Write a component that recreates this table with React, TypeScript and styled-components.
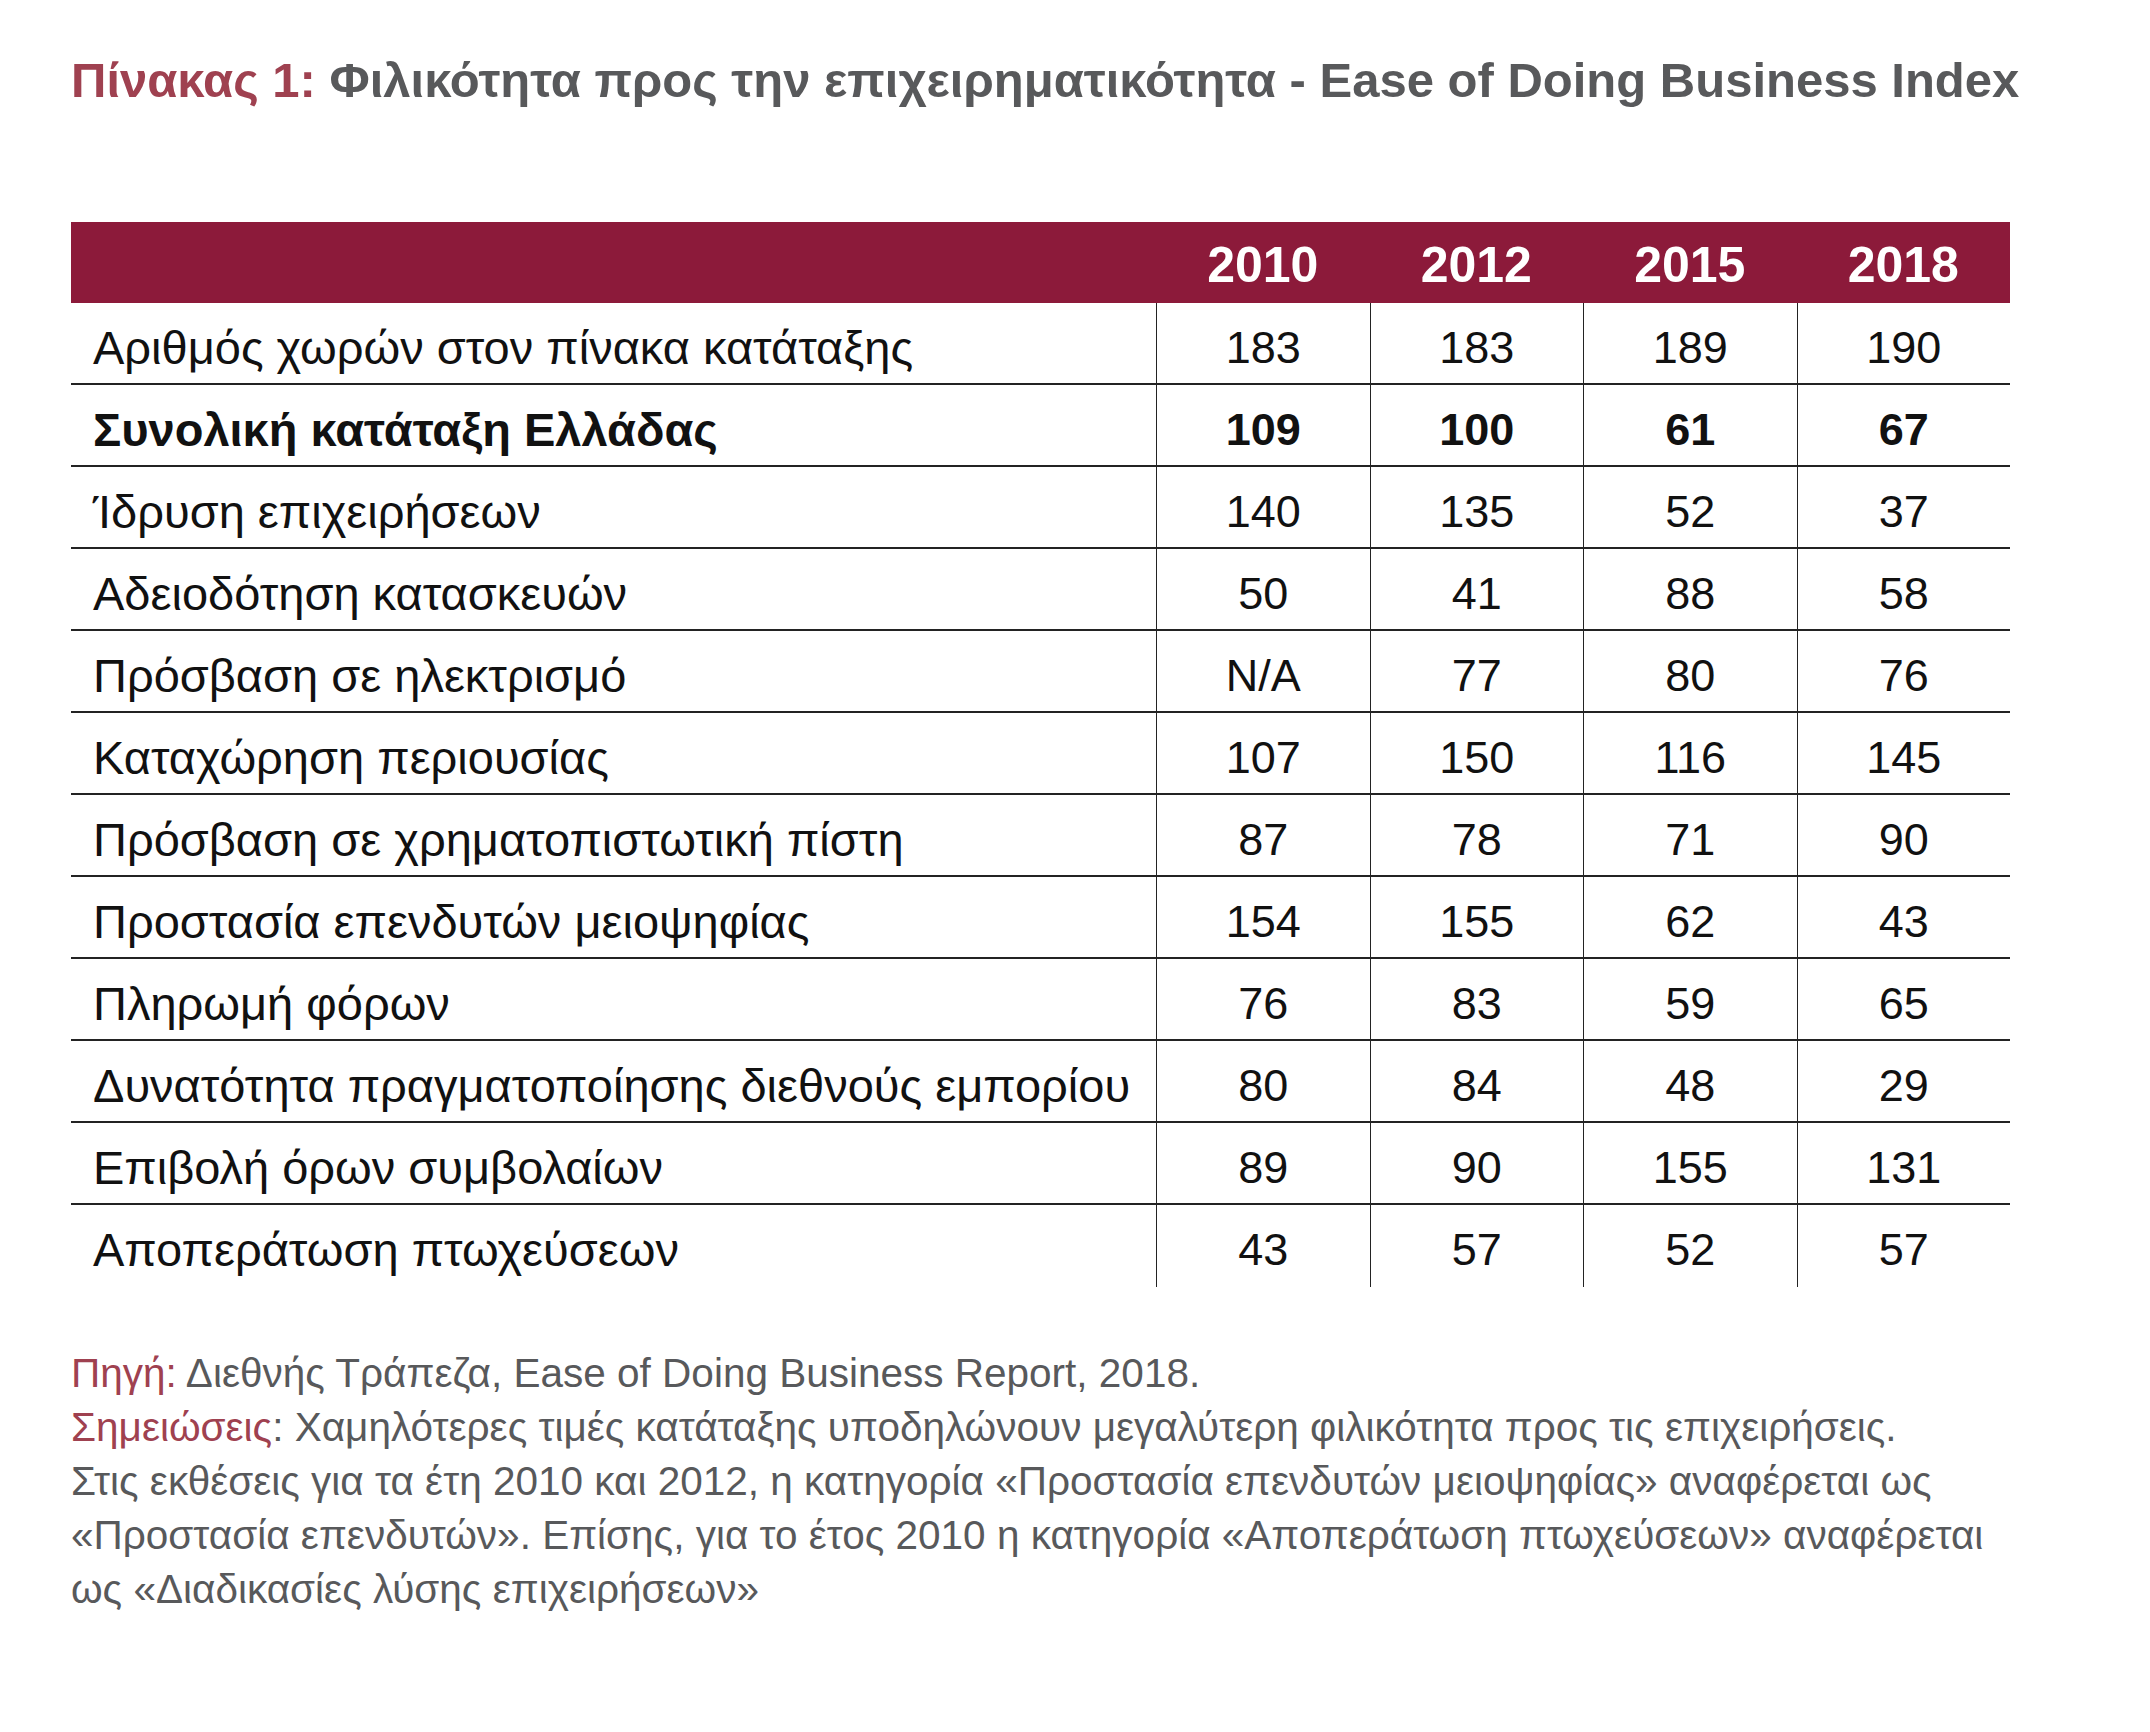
import React from "react";
import styled, { createGlobalStyle } from "styled-components";

const GlobalStyle = createGlobalStyle`
  html, body { margin: 0; padding: 0; background: #ffffff; }
  body { font-family: "Liberation Sans", Arial, sans-serif; }
`;

const MAROON = "#8c1a3a";
const ACCENT = "#9f4150";
const GRAY = "#58595b";

const Page = styled.div`
  width: 2150px;
  min-height: 1732px;
  box-sizing: border-box;
  padding: 50px 140px 0 71px;
  display: flex;
  flex-direction: column;
`;

const Title = styled.h1`
  margin: 0;
  font-family: "Liberation Sans Narrow", "Liberation Sans", Arial, sans-serif;
  font-stretch: condensed;
  font-weight: 700;
  font-size: 49px;
  line-height: 60px;
  color: ${GRAY};
  white-space: nowrap;
`;

const TitleLead = styled.span`
  color: ${ACCENT};
`;

const Table = styled.div`
  margin-top: 112px;
  width: 1939px;
  display: grid;
  grid-template-columns: 1085px repeat(4, 1fr);
`;

const HeaderCell = styled.div`
  height: 81px;
  box-sizing: border-box;
  padding-top: 5px;
  background: ${MAROON};
  color: #ffffff;
  font-weight: 700;
  font-size: 50px;
  line-height: 76px;
  text-align: center;
`;

const Cell = styled.div<{ $num?: boolean; $bold?: boolean; $last?: boolean }>`
  height: 82px;
  box-sizing: border-box;
  padding-top: 9px;
  padding-left: ${(p) => (p.$num ? "0" : "22px")};
  border-bottom: ${(p) => (p.$last ? "none" : "2px solid #232323")};
  border-left: ${(p) => (p.$num ? "1px solid #232323" : "none")};
  font-size: ${(p) => (p.$num ? "45px" : "47px")};
  line-height: 71px;
  font-weight: ${(p) => (p.$bold ? 700 : 400)};
  color: #111111;
  text-align: ${(p) => (p.$num ? "center" : "left")};
  white-space: nowrap;
`;

const Notes = styled.div`
  margin-top: 59px;
  font-size: 40.5px;
  line-height: 54px;
  color: ${GRAY};
  white-space: nowrap;
`;

const NoteLine = styled.div``;

const NoteLabel = styled.span`
  color: ${ACCENT};
`;

const years = ["2010", "2012", "2015", "2018"];

const rows: { label: string; values: string[]; bold?: boolean }[] = [
  { label: "Αριθμός χωρών στον πίνακα κατάταξης", values: ["183", "183", "189", "190"] },
  { label: "Συνολική κατάταξη Ελλάδας", values: ["109", "100", "61", "67"], bold: true },
  { label: "Ίδρυση επιχειρήσεων", values: ["140", "135", "52", "37"] },
  { label: "Αδειοδότηση κατασκευών", values: ["50", "41", "88", "58"] },
  { label: "Πρόσβαση σε ηλεκτρισμό", values: ["N/A", "77", "80", "76"] },
  { label: "Καταχώρηση περιουσίας", values: ["107", "150", "116", "145"] },
  { label: "Πρόσβαση σε χρηματοπιστωτική πίστη", values: ["87", "78", "71", "90"] },
  { label: "Προστασία επενδυτών μειοψηφίας", values: ["154", "155", "62", "43"] },
  { label: "Πληρωμή φόρων", values: ["76", "83", "59", "65"] },
  { label: "Δυνατότητα πραγματοποίησης διεθνούς εμπορίου", values: ["80", "84", "48", "29"] },
  { label: "Επιβολή όρων συμβολαίων", values: ["89", "90", "155", "131"] },
  { label: "Αποπεράτωση πτωχεύσεων", values: ["43", "57", "52", "57"] },
];

export default function App() {
  return (
    <>
      <GlobalStyle />
      <Page>
        <Title>
          <TitleLead>Πίνακας 1:</TitleLead> Φιλικότητα προς την επιχειρηματικότητα - Ease of Doing Business Index
        </Title>
        <Table>
          <HeaderCell />
          {years.map((y) => (
            <HeaderCell key={y}>{y}</HeaderCell>
          ))}
          {rows.map((r, i) => {
            const last = i === rows.length - 1;
            return (
              <React.Fragment key={r.label}>
                <Cell $bold={r.bold} $last={last}>
                  {r.label}
                </Cell>
                {r.values.map((v, j) => (
                  <Cell key={j} $num $bold={r.bold} $last={last}>
                    {v}
                  </Cell>
                ))}
              </React.Fragment>
            );
          })}
        </Table>
        <Notes>
          <NoteLine>
            <NoteLabel>Πηγή:</NoteLabel> Διεθνής Τράπεζα, Ease of Doing Business Report, 2018.
          </NoteLine>
          <NoteLine>
            <NoteLabel>Σημειώσεις</NoteLabel>: Χαμηλότερες τιμές κατάταξης υποδηλώνουν μεγαλύτερη φιλικότητα προς τις επιχειρήσεις.
          </NoteLine>
          <NoteLine>
            Στις εκθέσεις για τα έτη 2010 και 2012, η κατηγορία «Προστασία επενδυτών μειοψηφίας» αναφέρεται ως
          </NoteLine>
          <NoteLine>
            «Προστασία επενδυτών». Επίσης, για το έτος 2010 η κατηγορία «Αποπεράτωση πτωχεύσεων» αναφέρεται
          </NoteLine>
          <NoteLine>ως «Διαδικασίες λύσης επιχειρήσεων»</NoteLine>
        </Notes>
      </Page>
    </>
  );
}
